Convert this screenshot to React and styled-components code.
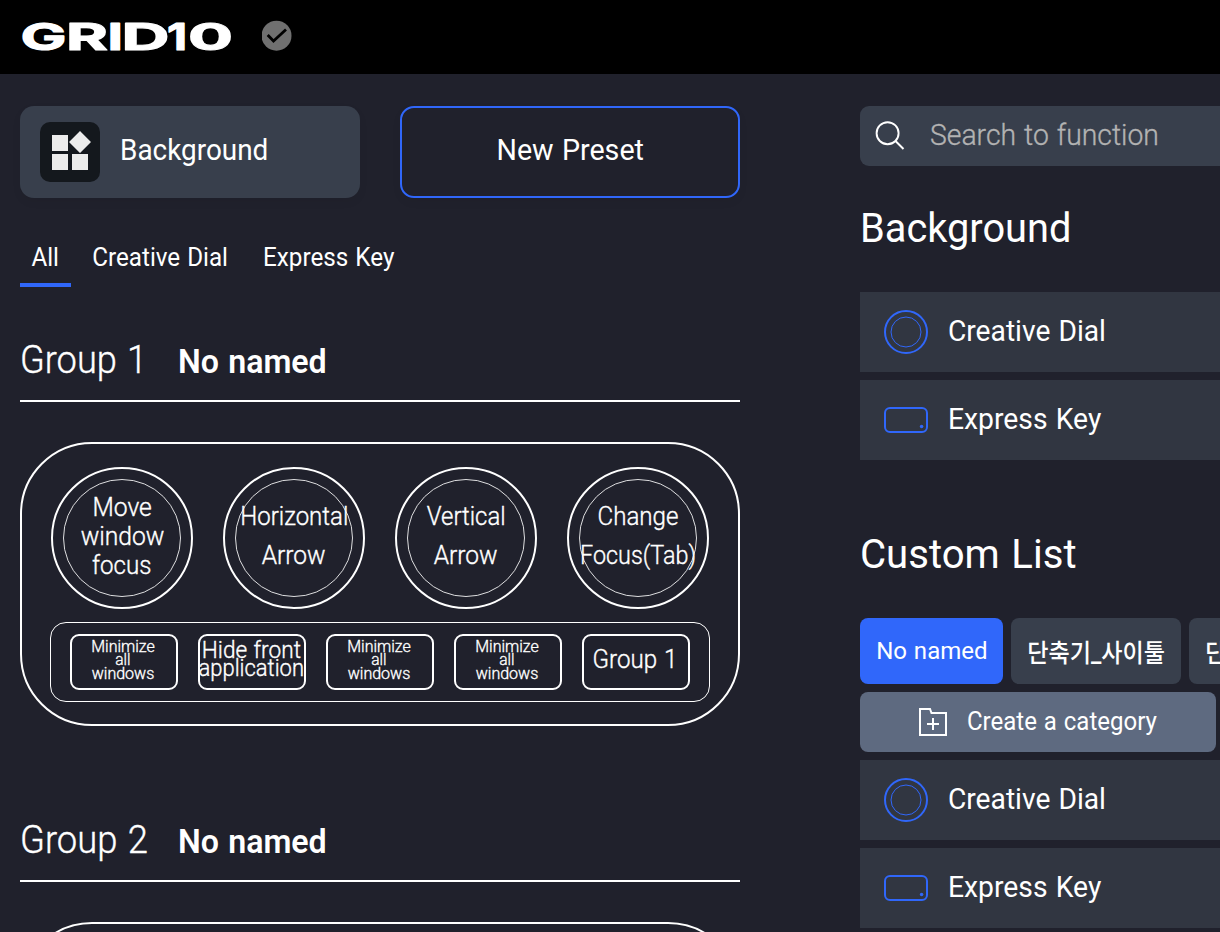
import React from "react";
import styled, { createGlobalStyle } from "styled-components";

const C = {
  page: "#20212c",
  card: "#383f4c",
  row: "#313641",
  blue: "#3067fa",
  slate: "#5e6a80",
  white: "#ffffff",
};

const Global = createGlobalStyle`
  * { box-sizing: border-box; }
  body {
    margin: 0;
    background: ${C.page};
    color: ${C.white};
    font-family: Roboto, "Noto Sans CJK KR", sans-serif;
    overflow: hidden;
  }
`;

const Page = styled.div`
  width: 1220px;
  height: 932px;
  overflow: hidden;
  background: ${C.page};
`;

const Header = styled.header`
  height: 74px;
  background: #000;
  padding: 20px 20px 0;
  display: flex;
  gap: 26px;
`;

const Logo = styled.svg`
  display: block;
  width: 216px;
  height: 34px;
  overflow: visible;
  font-family: Inter, sans-serif;
  font-size: 37.5px;
  font-weight: 700;
  fill: #fff;
  stroke: #fff;
  stroke-width: 1.1px;
  stroke-linejoin: round;
`;

const Columns = styled.main`
  display: flex;
  gap: 120px;
  padding: 32px 0 0 20px;
`;

const Left = styled.section`
  width: 720px;
  flex: none;
`;

const Right = styled.section`
  width: 480px;
  flex: none;
`;

const Label = styled.span`
  display: inline-block;
  white-space: nowrap;
  font-size: ${(p) => p.$size || 30}px;
  font-weight: ${(p) => p.$weight || 400};
  line-height: ${(p) => (p.$line ? p.$line + "px" : "1.2")};
  word-spacing: 0.04em;
  -webkit-text-stroke: ${(p) => (p.$weight === 300 ? "0.35px currentColor" : "0")};
  transform: scaleX(${(p) => p.$fit || 1});
  transform-origin: ${(p) => (p.$center ? "center" : "left")} center;
`;

const Actions = styled.div`
  display: flex;
  gap: 40px;
`;

const ActionCard = styled.button`
  width: 340px;
  height: 92px;
  border-radius: 14px;
  border: ${(p) => (p.$outlined ? `2px solid ${C.blue}` : "0")};
  background: ${(p) => (p.$outlined ? C.page : C.card)};
  color: inherit;
  font-family: inherit;
  padding: ${(p) => (p.$outlined ? "0 0 4px" : "0 20px")};
  display: flex;
  align-items: center;
  justify-content: ${(p) => (p.$outlined ? "center" : "flex-start")};
  gap: 20px;
  box-shadow: 0 4px 10px rgba(0, 0, 0, 0.05);
`;

const IconTile = styled.span`
  width: 60px;
  height: 60px;
  border-radius: 10px;
  background: #14181d;
  flex: none;
  svg { display: block; }
`;

const CardText = styled.span`
  padding-bottom: 4px;
`;

const Tabs = styled.nav`
  display: flex;
  gap: 10px;
  margin-top: 42px;
  height: 47px;
`;

const Tab = styled.div`
  width: ${(p) => p.$w}px;
  border-bottom: 4px solid ${(p) => (p.$active ? C.blue : "transparent")};
  text-align: center;
  padding-top: 3px;
`;

const GroupHead = styled.div`
  display: flex;
  align-items: baseline;
  height: 62px;
  margin-top: ${(p) => p.$top}px;
  border-bottom: 2px solid #fff;
`;

const GroupName = styled.div`
  width: 158px;
`;

const Board = styled.div`
  margin-top: 40px;
  height: 284px;
  border: 2px solid #fff;
  border-radius: 72px;
  padding: 23px 28px 0;
`;

const Dials = styled.div`
  display: flex;
  gap: 30px;
  padding-left: 1px;
`;

const Dial = styled.div`
  width: 142px;
  height: 142px;
  flex: none;
  border: 2px solid #fff;
  border-radius: 50%;
  padding: 10px;
`;

const DialFace = styled.div`
  width: 118px;
  height: 118px;
  border: 1px solid rgba(255, 255, 255, 0.85);
  border-radius: 50%;
  display: flex;
  flex-direction: column;
  align-items: center;
  justify-content: center;
  padding-bottom: 3px;
`;

const KeyStrip = styled.div`
  margin-top: 13px;
  height: 80px;
  border: 1px solid #fff;
  border-radius: 16px;
  display: flex;
  gap: 20px;
  padding: 11px 19px;
`;

const Key = styled.div`
  width: 108px;
  height: 56px;
  flex: none;
  border: 2px solid #fff;
  border-radius: 9px;
  display: flex;
  flex-direction: column;
  align-items: center;
  justify-content: center;
  padding: 0 2px 4px 0;
`;

const SearchBox = styled.div`
  height: 60px;
  border-radius: 9px;
  background: ${C.card};
  display: flex;
  align-items: center;
  gap: 24px;
  padding: 0 0 2px 14px;
  color: #b3b3b3;
`;

const Title = styled.h2`
  margin: ${(p) => p.$top}px 0 0;
  height: 50px;
  font-weight: 400;
`;

const FunctionList = styled.div`
  display: grid;
  gap: 8px;
  margin-top: ${(p) => p.$top}px;
`;

const FunctionRow = styled.div`
  height: 80px;
  background: ${C.row};
  padding-left: 24px;
  display: flex;
  align-items: center;
  gap: 20px;
  svg { display: block; flex: none; }
`;

const RowText = styled.span`
  padding-bottom: 2px;
`;

const Chips = styled.div`
  display: flex;
  gap: 8px;
  margin-top: 39px;
`;

const Chip = styled.div`
  width: ${(p) => p.$w}px;
  height: 66px;
  flex: none;
  border-radius: 8px;
  background: ${(p) => (p.$active ? C.blue : C.card)};
  display: flex;
  align-items: center;
  justify-content: center;
  padding-top: ${(p) => (p.$active ? 0 : 4)}px;
`;

const CreateButton = styled.button`
  width: 356px;
  height: 60px;
  margin-top: 8px;
  border: 0;
  border-radius: 8px;
  background: ${C.slate};
  color: inherit;
  font-family: inherit;
  display: flex;
  align-items: center;
  padding: 0 0 0 59px;
  gap: 20px;
`;

const DialIcon = () => (
  <svg width="44" height="44" fill="none" stroke={C.blue}>
    <circle cx="22" cy="22" r="21" strokeWidth="2" />
    <circle cx="22" cy="22" r="15" strokeWidth="1" />
  </svg>
);

const KeyIcon = () => (
  <svg width="44" height="26" fill="none">
    <rect x="1" y="1" width="42" height="24" rx="5" stroke={C.blue} strokeWidth="2" />
    <circle cx="37.6" cy="19.5" r="1.8" fill={C.blue} />
  </svg>
);

const dials = [
  { line: 29, words: [["Move", 0.985], ["window", 0.985], ["focus", 0.965]] },
  { line: 38.5, words: [["Horizontal", 0.96], ["Arrow", 0.98]] },
  { line: 38.5, words: [["Vertical", 0.957], ["Arrow", 0.98]] },
  { line: 38.5, words: [["Change", 0.965], ["Focus(Tab)", 0.935]] },
];

const minimize = { size: 16, line: 13.4, words: [["Minimize", 1], ["all", 0.97], ["windows", 1]] };
const keys = [
  minimize,
  { size: 23, line: 18, words: [["Hide front", 0.985], ["application", 0.955]] },
  minimize,
  minimize,
  { size: 25, line: 26, words: [["Group 1", 0.965]] },
];

function GroupBoard() {
  return (
    <Board>
      <Dials>
        {dials.map((d, i) => (
          <Dial key={i}>
            <DialFace>
              {d.words.map(([w, fit]) => (
                <Label key={w} $size={25} $weight={300} $line={d.line} $fit={fit} $center>{w}</Label>
              ))}
            </DialFace>
          </Dial>
        ))}
      </Dials>
      <KeyStrip>
        {keys.map((k, i) => (
          <Key key={i}>
            {k.words.map(([w, fit]) => (
              <Label key={w} $size={k.size} $weight={300} $line={k.line} $fit={fit} $center>{w}</Label>
            ))}
          </Key>
        ))}
      </KeyStrip>
    </Board>
  );
}

function Group({ name, fit, top }) {
  return (
    <>
      <GroupHead $top={top}>
        <GroupName><Label $size={38.5} $weight={300} $line={40} $fit={fit}>{name}</Label></GroupName>
        <Label $size={34} $weight={600} $line={38} $fit={0.945}>No named</Label>
      </GroupHead>
      <GroupBoard />
    </>
  );
}

function Functions({ top }) {
  return (
    <FunctionList $top={top}>
      <FunctionRow><DialIcon /><RowText><Label $fit={0.939}>Creative Dial</Label></RowText></FunctionRow>
      <FunctionRow><KeyIcon /><RowText><Label $fit={0.943}>Express Key</Label></RowText></FunctionRow>
    </FunctionList>
  );
}

export default function App() {
  return (
    <Page>
      <Global />
      <Header>
        <Logo viewBox="0 0 216 34" aria-label="GRID10">
          <text x="0.5" y="29.5" textLength="46" lengthAdjust="spacingAndGlyphs">G</text>
          <text x="46" y="29.5" textLength="42" lengthAdjust="spacingAndGlyphs">R</text>
          <text x="87.5" y="29.5" textLength="15.5" lengthAdjust="spacingAndGlyphs">I</text>
          <text x="101.5" y="29.5" textLength="48" lengthAdjust="spacingAndGlyphs">D</text>
          <text x="147" y="29.5" textLength="20" lengthAdjust="spacingAndGlyphs">1</text>
          <text x="168" y="29.5" textLength="45" lengthAdjust="spacingAndGlyphs">0</text>
        </Logo>
        <svg width="32" height="32">
          <circle cx="14.5" cy="15.7" r="15" fill="#707070" />
          <path d="M5.7 15L11.5 21L24 9.5" fill="none" stroke="#000" strokeWidth="2.8" />
        </svg>
      </Header>
      <Columns>
        <Left>
          <Actions>
            <ActionCard>
              <IconTile>
                <svg width="60" height="60" fill="#ececec">
                  <path d="M12 13h16v16H12zM12 32h16v16H12zM32 32h16v16H32zM40 9l11 11-11 11-11-11z" />
                </svg>
              </IconTile>
              <CardText><Label $fit={0.93}>Background</Label></CardText>
            </ActionCard>
            <ActionCard $outlined><Label $fit={0.955} $center>New Preset</Label></ActionCard>
          </Actions>
          <Tabs>
            <Tab $w={51} $active><Label $size={25} $fit={0.967} $center>All</Label></Tab>
            <Tab $w={159}><Label $size={25} $fit={0.968} $center>Creative Dial</Label></Tab>
            <Tab $w={157}><Label $size={25} $fit={0.97} $center>Express Key</Label></Tab>
          </Tabs>
          <Group name="Group 1" fit={0.94} top={53} />
          <Group name="Group 2" fit={0.945} top={94} />
        </Left>
        <Right>
          <SearchBox>
            <svg width="32" height="32" fill="none" stroke="#fff" strokeWidth="1.9">
              <circle cx="13.6" cy="14.2" r="11" />
              <path d="M21.5 22L29.5 30" />
            </svg>
            <Label $weight={300} $fit={0.944}>Search to function</Label>
          </SearchBox>
          <Title $top={37}><Label $size={41.5} $line={50} $fit={0.958}>Background</Label></Title>
          <Functions top={39} />
          <Title $top={69}><Label $size={41.5} $line={50} $fit={0.967}>Custom List</Label></Title>
          <Chips>
            <Chip $w={143} $active><Label $size={24.5} $fit={0.98} $center>No named</Label></Chip>
            <Chip $w={170}><Label $size={25.5} $weight={500} $fit={0.905} $center>단축기_사이툴</Label></Chip>
            <Chip $w={170}><Label $size={25.5} $weight={500} $fit={0.905} $center>단축기_사이툴</Label></Chip>
          </Chips>
          <CreateButton>
            <svg width="28" height="28" fill="none" stroke="#fff" strokeWidth="2">
              <path d="M1 1H11L12.5 5H27V27H1Z" />
              <path d="M14 10v12M8 16h12" />
            </svg>
            <Label $size={25} $fit={0.96}>Create a category</Label>
          </CreateButton>
          <Functions top={8} />
        </Right>
      </Columns>
    </Page>
  );
}
